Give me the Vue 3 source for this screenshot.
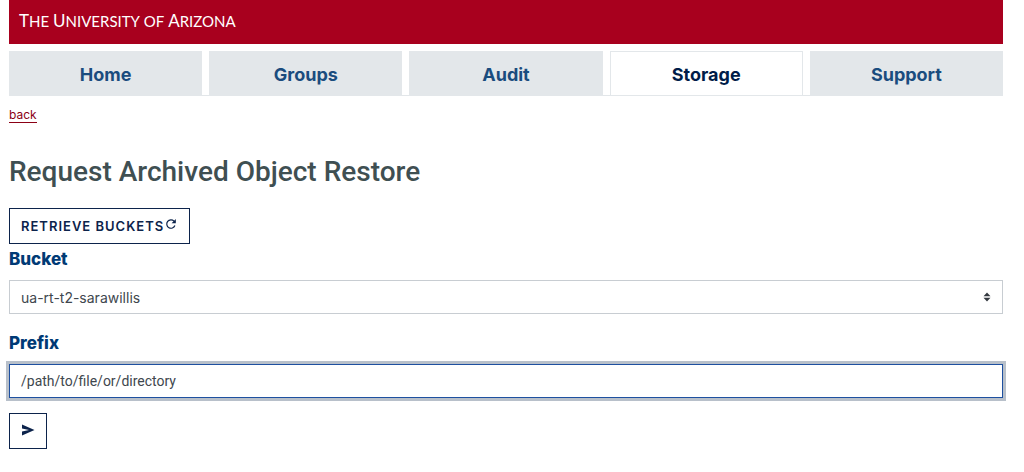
<script setup>
import { ref } from 'vue'

const wordmark = ['The', 'University', 'of', 'Arizona']
const tabs = ['Home', 'Groups', 'Audit', 'Storage', 'Support']
const active = 'Storage'
const buckets = ['ua-rt-t2-sarawillis']
const bucket = ref(buckets[0])
const prefix = ref('/path/to/file/or/directory')
</script>

<template>
  <div class="page">
    <header class="banner">
      <a class="wordmark" href="#">
        <template v-for="word in wordmark" :key="word">
          <span :class="{ cap: word !== 'of' }">{{ word }}</span>{{ ' ' }}
        </template>
      </a>
    </header>

    <nav class="tabs" aria-label="Main">
      <a
        v-for="tab in tabs"
        :key="tab"
        href="#"
        class="tab"
        :class="{ active: tab === active }"
        :aria-current="tab === active ? 'page' : undefined"
      >{{ tab }}</a>
    </nav>

    <main>
      <a class="back" href="#">back</a>
      <h1>Request Archived Object Restore</h1>

      <form @submit.prevent>
        <button type="button" class="btn">
          <span>Retrieve Buckets</span>
          <svg class="refresh" viewBox="0 0 12 12" aria-hidden="true">
            <path d="M9.9 7.5A4.2 4.2 0 1 1 9 3.1L10 4" fill="none" stroke="currentColor" stroke-width="1.2" />
            <path d="M10.8 1v4.2H6.6z" fill="currentColor" />
          </svg>
        </button>

        <label for="bucket">Bucket</label>
        <div class="select-wrap">
          <select id="bucket" v-model="bucket" class="control">
            <option v-for="b in buckets" :key="b">{{ b }}</option>
          </select>
          <svg class="arrows" viewBox="0 0 8 10" aria-hidden="true">
            <path d="M4 0.5L7.5 4.2h-7zM4 9.5L0.5 5.8h7z" fill="#343a40" />
          </svg>
        </div>

        <label for="prefix">Prefix</label>
        <input id="prefix" v-model="prefix" class="control focused" type="text" />

        <button type="submit" class="btn send" aria-label="Send">
          <svg viewBox="0 0 14 12" aria-hidden="true">
            <path d="M1 0.5L13.5 6L1 11.5V7.5L8 6L1 4.5z" fill="currentColor" />
          </svg>
        </button>
      </form>
    </main>
  </div>
</template>

<style>
body {
  margin: 0;
  background: #fff;
}
</style>

<style scoped>
.page {
  margin: 0 21px 0 9px;
  font-family: Inter, "Liberation Sans", sans-serif;
}

.banner {
  display: flex;
  align-items: center;
  height: 44px;
  padding: 0 10px 2px;
  box-sizing: border-box;
  background: #a8001e;
}

.wordmark {
  color: #fff;
  font-family: Lato, sans-serif;
  font-size: 15px;
  line-height: 20px;
  text-decoration: none;
  text-transform: uppercase;
}

.wordmark span {
  display: inline-block;
}

.cap::first-letter {
  font-size: 17px;
}

.tabs {
  display: grid;
  grid-template-columns: repeat(5, 1fr);
  gap: 7px;
  margin-top: 7px;
  border-bottom: 1px solid #e2e6e9;
}

.tab {
  margin-bottom: -1px;
  padding-top: 1px;
  height: 42px;
  border: 1px solid #e3e7ea;
  background: #e3e7ea;
  color: #1a4c7e;
  font-size: 18px;
  font-weight: 700;
  line-height: 43px;
  text-align: center;
  text-decoration: none;
}

.tab.active {
  border-bottom-color: #e3e7ea;
  background: #fff;
  color: #001c48;
}

.back {
  display: inline-block;
  margin-top: 12px;
  border-bottom: 1px solid #8b0015;
  color: #8b0015;
  font-size: 12px;
  line-height: 14px;
  text-decoration: none;
}

h1 {
  margin: 33px 0 20px;
  color: #3f4f52;
  font-family: Roboto, sans-serif;
  font-size: 28px;
  font-weight: 500;
  line-height: 32px;
}

form {
  display: flex;
  flex-direction: column;
  align-items: flex-start;
}

.btn {
  display: flex;
  align-items: center;
  height: 36px;
  padding: 0 11px;
  border: 1px solid #0c234b;
  background: #fff;
  color: #0c234b;
  font-family: inherit;
  font-size: 13px;
  font-weight: 600;
  letter-spacing: 1px;
  text-transform: uppercase;
}

.refresh {
  width: 12px;
  height: 12px;
  margin: 0 1px 4px 1px;
}

label {
  margin: 4px 0 10px;
  color: #003a75;
  font-size: 17px;
  font-weight: 800;
  line-height: 22px;
}

.select-wrap {
  position: relative;
  width: 100%;
  margin-bottom: 14px;
}

.control {
  display: block;
  width: 100%;
  height: 34px;
  box-sizing: border-box;
  margin: 0;
  padding: 0 11px;
  border: 1px solid #c8cdd2;
  border-radius: 0;
  outline: none;
  appearance: none;
  background: #fff;
  color: #40474e;
  font-family: Roboto, sans-serif;
  font-size: 14px;
}

select.control {
  font-family: Inter, sans-serif;
}

.arrows {
  position: absolute;
  top: 12px;
  right: 12px;
  width: 8px;
  height: 10px;
  pointer-events: none;
}

.focused {
  border-color: #1e50a0;
  box-shadow: 0 0 0 3px #b8c0ca;
}

.send {
  width: 38px;
  margin-top: 15px;
}

.send svg {
  width: 14px;
  height: 12px;
  margin-bottom: 2px;
}
</style>
